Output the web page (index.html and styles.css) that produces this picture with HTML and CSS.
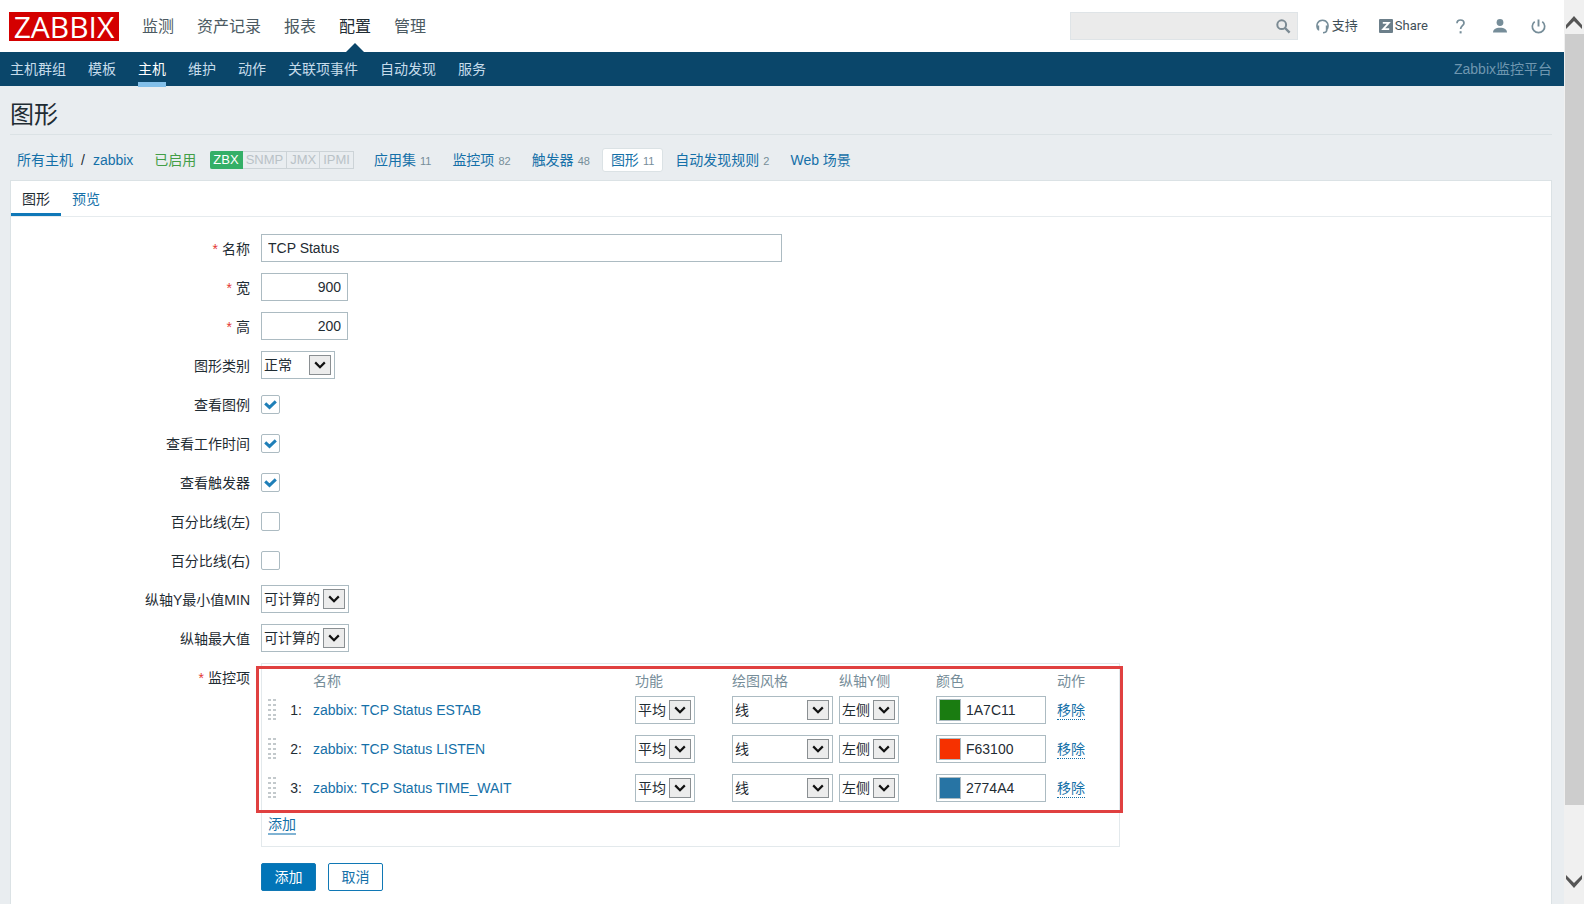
FILE: index.html
```html
<!DOCTYPE html>
<html lang="zh-CN">
<head>
<meta charset="utf-8">
<title>图形</title>
<link rel="stylesheet" href="styles.css">
</head>
<body>
<svg class="defs" aria-hidden="true">
  <symbol id="chevron" viewBox="0 0 12 8"><path d="M1.200 1.400 6 6.200l4.800-4.800" fill="none" stroke="#111" stroke-width="2.200"/></symbol>
  <symbol id="grip" viewBox="0 0 8 22"><path d="M0 0h3v2H0zM5 0h3v2H5zM0 5h3v2H0zM5 5h3v2H5zM0 10h3v2H0zM5 10h3v2H5zM0 15h3v2H0zM5 15h3v2H5zM0 19h3v2H0zM5 19h3v2H5z" fill="#c3c9cc"/></symbol>
</svg>
<div class="page">
  <header class="top">
    <a class="logo" href="#">ZABBIX</a>
    <nav class="main-nav">
      <a href="#">监测</a><a href="#">资产记录</a><a href="#">报表</a><a class="selected" href="#">配置</a><a href="#">管理</a>
    </nav>
    <form class="search">
      <input type="text" aria-label="搜索">
      <button type="button" aria-label="搜索"><svg width="15" height="15" viewBox="0 0 15 15"><circle cx="5.700" cy="5.700" r="4.400" fill="none" stroke="#7b8a93" stroke-width="2"/><path d="M9 9l4.600 4.600" stroke="#7b8a93" stroke-width="2.400"/></svg></button>
    </form>
    <div class="tools">
      <a href="#"><svg width="13" height="15" viewBox="0 0 13 15"><path d="M1.800 10.500C-.2 6 1.500 1.200 6.500 1.200s6.700 4.800 4.700 9.300" fill="none" stroke="#768d99" stroke-width="1.500"/><path d="M.6 6.500h2.600v5H1.900zM12.400 6.500H9.800v5h1.300z" fill="#768d99"/><path d="M11 11c-.5 2-1.600 2.700-4 2.800" fill="none" stroke="#768d99" stroke-width="1.400"/></svg>支持</a>
      <a class="share" href="#"><svg width="14" height="14" viewBox="0 0 14 14"><rect width="14" height="14" rx="1" fill="#6c7f8a"/><path d="M3.800 3.900h6L4.200 10.100h6" fill="none" stroke="#fff" stroke-width="1.800"/></svg>Share</a>
      <a class="help" href="#" aria-label="帮助"><svg width="9" height="15" viewBox="0 0 9 15"><path d="M1 4.300C1 2 2.500 1 4.500 1S8 2.200 8 4c0 2.600-3.400 2.900-3.400 6" fill="none" stroke="#768d99" stroke-width="1.700"/><path d="M3.600 12.200h2v2.200h-2z" fill="#768d99"/></svg></a>
      <a class="user" href="#" aria-label="用户"><svg width="14" height="14" viewBox="0 0 14 14"><circle cx="7" cy="3.500" r="3.400" fill="#768d99"/><path d="M0 13.500c0-3 2.500-4.800 7-4.800s7 1.800 7 4.800z" fill="#768d99"/></svg></a>
      <a class="power" href="#" aria-label="退出"><svg width="15" height="15" viewBox="0 0 15 15"><path d="M3.700 2.600a6.200 6.200 0 1 0 7.600 0" fill="none" stroke="#768d99" stroke-width="1.700"/><path d="M7.500.5v7" stroke="#768d99" stroke-width="1.900"/></svg></a>
    </div>
  </header>
  <nav class="sub-nav">
    <a href="#">主机群组</a><a href="#">模板</a><a class="selected" href="#">主机</a><a href="#">维护</a><a href="#">动作</a><a href="#">关联项事件</a><a href="#">自动发现</a><a href="#">服务</a>
    <span class="server">Zabbix监控平台</span>
  </nav>
  <main class="content">
    <h1>图形</h1>
    <nav class="crumbs">
      <a href="#">所有主机</a><span class="slash">/</span><a href="#">zabbix</a>
      <span class="enabled">已启用</span>
      <span class="tags"><span class="on">ZBX</span><span>SNMP</span><span>JMX</span><span>IPMI</span></span>
      <span class="links">
        <a href="#">应用集<sup>11</sup></a><a href="#">监控项<sup>82</sup></a><a href="#">触发器<sup>48</sup></a><a class="current" href="#">图形<sup>11</sup></a><a href="#">自动发现规则<sup>2</sup></a><a href="#">Web 场景</a>
      </span>
    </nav>
    <section class="panel">
      <nav class="tabs"><a class="active" href="#">图形</a><a href="#">预览</a></nav>
      <form class="form">
        <label class="req" for="name">名称</label>
        <div><input class="field name" id="name" type="text" value="TCP Status"></div>
        <label class="req" for="width">宽</label>
        <div><input class="field num" id="width" type="text" value="900"></div>
        <label class="req" for="height">高</label>
        <div><input class="field num" id="height" type="text" value="200"></div>
        <label for="type">图形类别</label>
        <div><span class="select w-type"><select id="type"><option>正常</option></select><i><svg><use href="#chevron"/></svg></i></span></div>
        <label for="legend">查看图例</label>
        <div><span class="check"><input id="legend" type="checkbox" checked><svg viewBox="0 0 13 10"><path d="M1.200 3.400l4.300 4L11.800 1.400" /></svg></span></div>
        <label for="work">查看工作时间</label>
        <div><span class="check"><input id="work" type="checkbox" checked><svg viewBox="0 0 13 10"><path d="M1.200 3.400l4.300 4L11.800 1.400" /></svg></span></div>
        <label for="trig">查看触发器</label>
        <div><span class="check"><input id="trig" type="checkbox" checked><svg viewBox="0 0 13 10"><path d="M1.200 3.400l4.300 4L11.800 1.400" /></svg></span></div>
        <label for="left">百分比线(左)</label>
        <div><span class="check"><input id="left" type="checkbox"></span></div>
        <label for="right">百分比线(右)</label>
        <div><span class="check"><input id="right" type="checkbox"></span></div>
        <label for="ymin">纵轴Y最小值MIN</label>
        <div><span class="select w-calc"><select id="ymin"><option>可计算的</option></select><i><svg><use href="#chevron"/></svg></i></span></div>
        <label for="ymax">纵轴最大值</label>
        <div><span class="select w-calc"><select id="ymax"><option>可计算的</option></select><i><svg><use href="#chevron"/></svg></i></span></div>
        <span class="req label">监控项</span>
        <div class="items">
          <div class="marked">
            <table>
              <colgroup><col class="c-grip"><col class="c-no"><col class="c-name"><col class="c-func"><col class="c-draw"><col class="c-axis"><col class="c-color"><col class="c-act"></colgroup>
              <thead><tr><th></th><th></th><th>名称</th><th>功能</th><th>绘图风格</th><th>纵轴Y侧</th><th>颜色</th><th>动作</th></tr></thead>
              <tbody>
                <tr>
                  <td><svg class="grip"><use href="#grip"/></svg></td><td class="no">1:</td><td><a href="#">zabbix: TCP Status ESTAB</a></td>
                  <td><span class="select w-short"><select aria-label="功能"><option>平均</option></select><i><svg><use href="#chevron"/></svg></i></span></td>
                  <td><span class="select w-draw"><select aria-label="绘图风格"><option>线</option></select><i><svg><use href="#chevron"/></svg></i></span></td>
                  <td><span class="select w-short"><select aria-label="纵轴Y侧"><option>左侧</option></select><i><svg><use href="#chevron"/></svg></i></span></td>
                  <td><span class="color"><button class="swatch green" type="button" aria-label="选择颜色"></button><input type="text" aria-label="颜色" value="1A7C11"></span></td>
                  <td><button class="link" type="button">移除</button></td>
                </tr>
                <tr>
                  <td><svg class="grip"><use href="#grip"/></svg></td><td class="no">2:</td><td><a href="#">zabbix: TCP Status LISTEN</a></td>
                  <td><span class="select w-short"><select aria-label="功能"><option>平均</option></select><i><svg><use href="#chevron"/></svg></i></span></td>
                  <td><span class="select w-draw"><select aria-label="绘图风格"><option>线</option></select><i><svg><use href="#chevron"/></svg></i></span></td>
                  <td><span class="select w-short"><select aria-label="纵轴Y侧"><option>左侧</option></select><i><svg><use href="#chevron"/></svg></i></span></td>
                  <td><span class="color"><button class="swatch red" type="button" aria-label="选择颜色"></button><input type="text" aria-label="颜色" value="F63100"></span></td>
                  <td><button class="link" type="button">移除</button></td>
                </tr>
                <tr>
                  <td><svg class="grip"><use href="#grip"/></svg></td><td class="no">3:</td><td><a href="#">zabbix: TCP Status TIME_WAIT</a></td>
                  <td><span class="select w-short"><select aria-label="功能"><option>平均</option></select><i><svg><use href="#chevron"/></svg></i></span></td>
                  <td><span class="select w-draw"><select aria-label="绘图风格"><option>线</option></select><i><svg><use href="#chevron"/></svg></i></span></td>
                  <td><span class="select w-short"><select aria-label="纵轴Y侧"><option>左侧</option></select><i><svg><use href="#chevron"/></svg></i></span></td>
                  <td><span class="color"><button class="swatch blue" type="button" aria-label="选择颜色"></button><input type="text" aria-label="颜色" value="2774A4"></span></td>
                  <td><button class="link" type="button">移除</button></td>
                </tr>
              </tbody>
            </table>
          </div>
          <button class="link add" type="button">添加</button>
        </div>
        <div class="actions"><button class="btn primary" type="button">添加</button><button class="btn" type="button">取消</button></div>
      </form>
    </section>
  </main>
</div>
<div class="scrollbar" aria-hidden="true">
  <svg class="arrow" viewBox="0 0 18 14"><path d="M1 10 9 1l8 9v4L9 6l-8 8z" fill="#555"/></svg>
  <div class="thumb"></div>
  <div class="track"></div>
  <svg class="arrow" viewBox="0 0 18 14"><path d="M1 4l8 9 8-9V0L9 8 1 0z" fill="#555"/></svg>
</div>
</body>
</html>
```

FILE: styles.css
```css
* { box-sizing: border-box; }
body {
  margin: 0;
  height: 100vh;
  display: flex;
  overflow: hidden;
  background: #fff;
  color: #1f2c33;
  font: 14px/20px "Liberation Sans", "Noto Sans CJK SC", sans-serif;
}
a { color: #1570a8; text-decoration: none; }
input, select, button { font: inherit; color: inherit; margin: 0; }
svg { display: block; flex: none; }
.defs { position: absolute; width: 0; height: 0; }

.page {
  flex: 1;
  min-width: 0;
  display: flex;
  flex-direction: column;
  background: #e9edf0;
}

/* Header */
.top {
  height: 52px;
  flex: none;
  display: flex;
  align-items: center;
  padding: 0 18px 0 9px;
  background: #fff;
}
.logo {
  width: 110px;
  height: 29px;
  background: #d40000;
  color: #fff;
  font: 500 30px/29px "Open Sans", sans-serif;
  text-align: center;
}
.main-nav {
  display: flex;
  gap: 23px;
  margin-left: 23px;
  align-self: stretch;
  font-size: 16px;
  line-height: 53px;
}
.main-nav a { color: #4c5a62; }
.main-nav .selected { position: relative; color: #1f2c33; }
.main-nav .selected::after {
  content: "";
  position: absolute;
  bottom: 0;
  left: 50%;
  margin-left: -9px;
  border: 9px solid transparent;
  border-top: 0;
  border-bottom-color: #0a466a;
}
.search {
  display: flex;
  align-items: center;
  width: 228px;
  height: 28px;
  margin-left: auto;
  padding-right: 6px;
  background: #ebebeb;
  border: 1px solid #dfe4e7;
}
.search input { flex: 1; min-width: 0; border: 0; background: none; }
.search button { border: 0; padding: 0; background: none; }
.tools { display: flex; align-items: center; margin-left: 18px; font-size: 13px; }
.tools a { display: flex; align-items: center; gap: 3px; color: #3f4f58; }
.tools .share { margin-left: 21px; gap: 2px; font-family: Roboto, sans-serif; }
.tools .help { margin-left: 28px; }
.tools .user { margin-left: 28px; }
.tools .power { margin-left: 24px; }

.sub-nav {
  height: 34px;
  flex: none;
  display: flex;
  gap: 22px;
  padding: 0 12px 0 10px;
  background: #0a466a;
  line-height: 34px;
}
.sub-nav a { color: #c6dceb; }
.sub-nav .selected { color: #fff; position: relative; }
.sub-nav .selected::after {
  content: "";
  position: absolute;
  left: 0;
  right: 0;
  bottom: -1px;
  height: 5px;
  background: #82bfe9;
}
.server { margin-left: auto; color: #6f97b0; }

/* Page title and host links */
.content {
  flex: 1;
  display: flex;
  flex-direction: column;
  padding: 0 12px 0 10px;
}
h1 {
  margin: 0 0 12px;
  padding: 14px 0 4px;
  border-bottom: 1px solid #dbe2e5;
  font-size: 24px;
  font-weight: 400;
  line-height: 30px;
}
.crumbs { display: flex; align-items: center; height: 25px; padding-left: 7px; }
.slash { margin: 0 8px; }
.enabled { margin-left: 21px; color: #429e47; }
.tags { display: flex; margin-left: 14px; font-size: 13px; line-height: 16px; }
.tags span {
  padding: 0 3px;
  border: 1px solid #ccd3d7;
  border-left: 0;
  color: #b9c2c7;
}
.tags .on { border-color: #34af67; background: #34af67; color: #fff; padding: 0 3px; border-radius: 2px 0 0 2px; }
.links { display: flex; gap: 3px; margin-left: 11px; }
.links a { padding: 1px 8px; border: 1px solid transparent; border-radius: 3px; }
.links .current { background: #fff; border-color: #dbe2e5; }
.links sup {
  margin-left: 4px;
  color: #768d99;
  font-size: 11px;
  line-height: 1;
  vertical-align: baseline;
}

/* Form panel */
.panel {
  flex: 1;
  margin-top: 8px;
  border: 1px solid #dbe2e5;
  border-bottom: 0;
  background: #fff;
}
.tabs { display: flex; border-bottom: 1px solid #e6ebee; }
.tabs a { padding: 8px 11px 4px; border-bottom: 3px solid transparent; }
.tabs .active { color: #1f2c33; border-bottom-color: #0f78b8; }
.form {
  display: grid;
  grid-template-columns: 239px 1fr;
  column-gap: 11px;
  row-gap: 11px;
  padding-top: 17px;
}
.form > div { min-height: 28px; display: flex; align-items: center; }
.form > label, .form > .label { text-align: right; line-height: 30px; height: 28px; }
.req::before { content: "*"; color: #e33734; margin-right: 4px; }
.field {
  height: 28px;
  padding: 0 6px;
  border: 1px solid #acbbc2;
  background: #fff;
}
.name { width: 521px; }
.num { width: 87px; text-align: right; }

.select {
  position: relative;
  display: block;
  height: 28px;
}
.select select {
  appearance: none;
  display: block;
  width: 100%;
  height: 100%;
  padding: 0 0 0 2px;
  border: 1px solid #acbbc2;
  border-radius: 0;
  background: #fff;
}
.select i {
  position: absolute;
  right: 4px;
  top: 4px;
  width: 22px;
  height: 20px;
  display: flex;
  align-items: center;
  justify-content: center;
  border: 1px solid #8a8f92;
  background: #ececec;
  pointer-events: none;
}
.select svg { width: 12px; height: 8px; }
.w-type { width: 74px; }
.w-calc { width: 88px; }
.w-short { width: 60px; }
.w-draw { width: 101px; }

.check { position: relative; display: block; width: 19px; height: 19px; }
.check input {
  appearance: none;
  display: block;
  width: 19px;
  height: 19px;
  border: 1px solid #acbbc2;
  border-radius: 2px;
  background: #fff;
}
.check svg { position: absolute; left: 3px; top: 5px; width: 13px; height: 10px; pointer-events: none; }
.check path { fill: none; stroke: #1f7fb8; stroke-width: 3px; }

/* Item table */
.form > .items {
  display: block;
  justify-self: start;
  border: 1px solid #e3e9ec;
  padding-bottom: 11px;
}
.marked { position: relative; padding: 9px 7px 8px 6px; }
.marked::after {
  content: "";
  position: absolute;
  inset: 2px -4px 2px -6px;
  border: 3px solid #e04040;
  pointer-events: none;
}
table { table-layout: fixed; width: 844px; border-collapse: collapse; }
th { padding: 0; height: 17px; line-height: 17px; text-align: left; font-weight: 400; color: #768d99; }
td { padding: 0; height: 39px; }
.c-grip { width: 20px; }
.c-no { width: 25px; }
.c-name { width: 322px; }
.c-func, .c-axis { width: 97px; }
.c-draw { width: 107px; }
.c-color { width: 121px; }
.grip { width: 8px; height: 22px; }
.no { text-align: right; padding-right: 11px; }
.color {
  display: flex;
  align-items: center;
  width: 110px;
  height: 28px;
  padding-left: 2px;
  border: 1px solid #acbbc2;
}
.color input { flex: 1; min-width: 0; border: 0; padding: 0 5px; background: none; }
.swatch { width: 22px; height: 22px; padding: 0; border: 1px solid #acbbc2; }
.green { background: #1a7c11; }
.red { background: #f63100; }
.blue { background: #2774a4; }
.link {
  padding: 0;
  border: 0;
  border-bottom: 1px dotted #1570a8;
  background: none;
  color: #1570a8;
  line-height: 18px;
}
.add { display: block; margin-left: 6px; border-bottom: 2px solid #80b3d3; }

.actions { grid-column: 2; gap: 12px; padding-top: 5px; }
.btn {
  width: 55px;
  height: 28px;
  padding: 0;
  border: 1px solid #1078b5;
  border-radius: 2px;
  background: #fff;
  color: #1570a8;
}
.primary { background: #0275b8; color: #fff; }

/* Scroll bar */
.scrollbar {
  flex: none;
  width: 22px;
  display: flex;
  flex-direction: column;
  align-items: center;
  padding: 15px 0;
  background: #f0f0f0;
  border-right: 2px solid #fff;
}
.arrow { width: 18px; height: 14px; }
.thumb { flex: 770; align-self: stretch; margin: 5px 0 0 1px; background: #cdcdcd; }
.track { flex: 70; }
```
